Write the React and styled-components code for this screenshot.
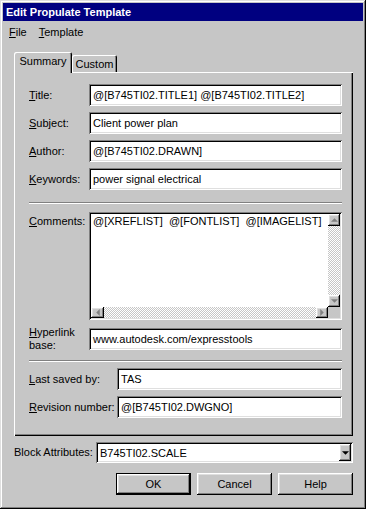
import styled, { createGlobalStyle } from "styled-components";

const GlobalStyle = createGlobalStyle`
  html, body {
    margin: 0;
    padding: 0;
    background: #c6c6c6;
  }
  body {
    font-family: "Liberation Sans", Arial, sans-serif;
    font-size: 11px;
    color: #000;
  }
`;

const raised = `
  box-shadow: inset -1px -1px #000, inset 1px 1px #fff,
    inset -2px -2px #808080, inset 2px 2px #dfdfdf;
`;

const sunken = `
  box-shadow: inset 1px 1px #808080, inset -1px -1px #fff,
    inset 2px 2px #000, inset -2px -2px #dfdfdf;
`;

const Window = styled.div`
  width: 366px;
  height: 509px;
  box-sizing: border-box;
  padding: 3px;
  background: #c6c6c6;
  box-shadow: inset -1px -1px #000, inset 1px 1px #dfdfdf,
    inset -2px -2px #808080, inset 2px 2px #fff;
  display: flex;
  flex-direction: column;
`;

const TitleBar = styled.div`
  height: 18px;
  background: #000080;
  color: #fff;
  font-weight: bold;
  font-size: 11px;
  display: flex;
  align-items: center;
  padding-left: 3px;
`;

const MenuBar = styled.div`
  height: 19px;
  display: flex;
  align-items: center;
  padding-top: 1px;
`;

const MenuItem = styled.div`
  padding: 0 6px;
`;

const Body = styled.div`
  padding: 11px 10px 0 11px;
  display: flex;
  flex-direction: column;
`;

const TabStrip = styled.div`
  height: 20px;
  display: flex;
  align-items: flex-end;
`;

const Tab = styled.div`
  position: relative;
  z-index: ${(p) => (p.$active ? 1 : 0)};
  width: ${(p) => p.$width}px;
  height: ${(p) => (p.$active ? 21 : 17)}px;
  margin-bottom: ${(p) => (p.$active ? -1 : 0)}px;
  padding-bottom: ${(p) => (p.$active ? 3 : 0)}px;
  box-sizing: border-box;
  background: #c6c6c6;
  border-radius: 2px 2px 0 0;
  box-shadow: inset 1px 1px #fff, inset -1px 0 #000, inset -2px 0 #808080;
  display: flex;
  align-items: center;
  justify-content: center;
`;

const Panel = styled.div`
  background: #c6c6c6;
  box-shadow: inset 1px 1px #fff, inset -1px -1px #000, inset -2px -2px #808080;
  padding: 12px 11px 18px 15px;
  display: flex;
  flex-direction: column;
`;

const Row = styled.div`
  display: flex;
  align-items: ${(p) => (p.$top ? "flex-start" : "center")};
  margin-top: ${(p) => p.$gap || 0}px;
`;

const Label = styled.div`
  width: ${(p) => p.$width || 60}px;
  flex-shrink: 0;
  line-height: 13px;
  padding-top: ${(p) => p.$pad || 0}px;
`;

const TwoLineLabel = styled(Label)`
  margin: -2px 0;
`;

const TextBox = styled.div`
  flex: 1;
  height: 22px;
  box-sizing: border-box;
  background: #fff;
  ${sunken}
  padding: 0 4px;
  display: flex;
  align-items: center;
  white-space: pre;
  overflow: hidden;
`;

const Separator = styled.div`
  margin-top: ${(p) => p.$gap}px;
  border-top: 1px solid #808080;
  border-bottom: 1px solid #fff;
`;

const Memo = styled.div`
  flex: 1;
  height: 108px;
  box-sizing: border-box;
  background: #fff;
  ${sunken}
  padding: 2px;
  display: grid;
  grid-template-columns: 1fr 12px;
  grid-template-rows: 1fr 11px;
`;

const MemoText = styled.div`
  padding: 1px 2px;
  white-space: pre;
  overflow: hidden;
`;

const Track = styled.div`
  display: flex;
  flex-direction: ${(p) => (p.$vertical ? "column" : "row")};
  justify-content: space-between;
  background: repeating-conic-gradient(#c6c6c6 0 25%, #fff 0 50%) 0 0 / 2px 2px;
`;

const ScrollButton = styled.div`
  width: ${(p) => p.$w}px;
  height: ${(p) => p.$h}px;
  background: #c6c6c6;
  ${raised}
  display: flex;
  align-items: center;
  justify-content: center;
`;

const Corner = styled.div`
  background: #c6c6c6;
`;

const Combo = styled.div`
  flex: 1;
  height: 21px;
  box-sizing: border-box;
  background: #fff;
  ${sunken}
  padding-left: 4px;
  display: flex;
  align-items: center;
  justify-content: space-between;
`;

const DropButton = styled.div`
  width: 12px;
  height: 17px;
  margin-right: 2px;
  background: #c6c6c6;
  ${raised}
  display: flex;
  align-items: center;
  justify-content: center;
`;

const ButtonRow = styled.div`
  margin-top: 10px;
  display: flex;
  justify-content: flex-end;
  gap: 6px;
`;

const Button = styled.button`
  width: 75px;
  height: 22px;
  border: none;
  padding: 0;
  background: #c6c6c6;
  font-family: inherit;
  font-size: 11px;
  color: #000;
  box-shadow: ${(p) =>
    p.$default
      ? "inset 0 0 0 1px #000, inset -2px -2px #000, inset 2px 2px #fff, inset -3px -3px #808080, inset 3px 3px #dfdfdf"
      : "inset -1px -1px #000, inset 1px 1px #fff, inset -2px -2px #808080, inset 2px 2px #dfdfdf"};
`;

const Arrow = ({ dir, color = "#808080" }) => {
  const pts = {
    up: "0,3 3,0 6,3",
    down: "0,0 6,0 3,3",
    left: "3,0 3,6 0,3",
    right: "0,0 3,3 0,6",
  }[dir];
  const vertical = dir === "up" || dir === "down";
  return (
    <svg width={vertical ? 7 : 4} height={vertical ? 4 : 7} viewBox={vertical ? "0 0 6 3" : "0 0 3 6"}>
      <polygon points={pts} fill={color} />
    </svg>
  );
};

const Field = ({ k, rest, value, gap, width }) => (
  <Row $gap={gap}>
    <Label $width={width}>
      <u>{k}</u>
      {rest}
    </Label>
    <TextBox>{value}</TextBox>
  </Row>
);

export default function App() {
  return (
    <>
      <GlobalStyle />
      <Window>
        <TitleBar>Edit Propulate Template</TitleBar>
        <MenuBar>
          <MenuItem>
            <u>F</u>ile
          </MenuItem>
          <MenuItem>
            <u>T</u>emplate
          </MenuItem>
        </MenuBar>
        <Body>
          <TabStrip>
            <Tab $active $width={58}>Summary</Tab>
            <Tab $width={45}>Custom</Tab>
          </TabStrip>
          <Panel>
            <Field k="T" rest="itle:" value="@[B745TI02.TITLE1] @[B745TI02.TITLE2]" />
            <Field k="S" rest="ubject:" value="Client power plan" gap={6} />
            <Field k="A" rest="uthor:" value="@[B745TI02.DRAWN]" gap={6} />
            <Field k="K" rest="eywords:" value="power signal electrical" gap={6} />
            <Separator $gap={12} />
            <Row $top $gap={8}>
              <Label $pad={3}>
                <u>C</u>omments:
              </Label>
              <Memo>
                <MemoText>@[XREFLIST]  @[FONTLIST]  @[IMAGELIST]</MemoText>
                <Track $vertical>
                  <ScrollButton $w={12} $h={12}>
                    <Arrow dir="up" />
                  </ScrollButton>
                  <ScrollButton $w={12} $h={12}>
                    <Arrow dir="down" />
                  </ScrollButton>
                </Track>
                <Track>
                  <ScrollButton $w={13} $h={11}>
                    <Arrow dir="left" />
                  </ScrollButton>
                  <ScrollButton $w={12} $h={11}>
                    <Arrow dir="right" />
                  </ScrollButton>
                </Track>
                <Corner />
              </Memo>
            </Row>
            <Row $gap={8}>
              <TwoLineLabel>
                <u>H</u>yperlink
                <br />
                base:
              </TwoLineLabel>
              <TextBox>www.autodesk.com/expresstools</TextBox>
            </Row>
            <Separator $gap={10} />
            <Field k="L" rest="ast saved by:" value="TAS" gap={6} width={88} />
            <Field k="R" rest="evision number:" value="@[B745TI02.DWGNO]" gap={6} width={88} />
          </Panel>
          <Row $gap={6}>
            <Label $width={82}>Block Attributes:</Label>
            <Combo>
              B745TI02.SCALE
              <DropButton>
                <Arrow dir="down" color="#000" />
              </DropButton>
            </Combo>
          </Row>
          <ButtonRow>
            <Button $default>OK</Button>
            <Button>Cancel</Button>
            <Button>Help</Button>
          </ButtonRow>
        </Body>
      </Window>
    </>
  );
}
